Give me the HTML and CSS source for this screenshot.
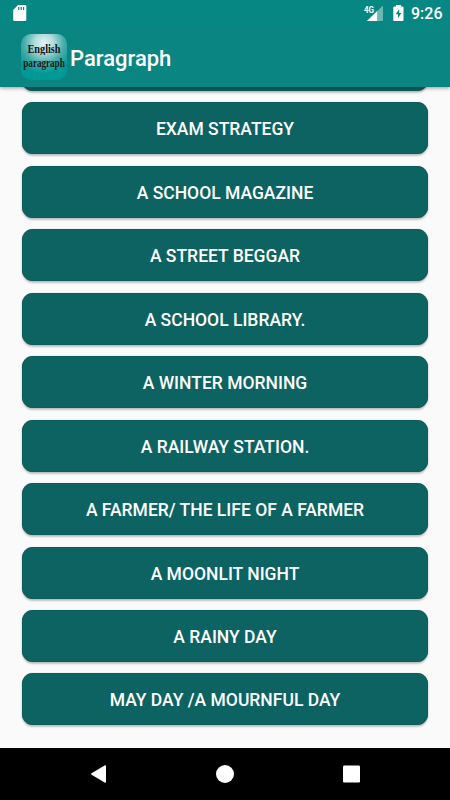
FILE: index.html
```html
<!DOCTYPE html>
<html lang="en">
<head>
<meta charset="utf-8">
<title>Paragraph</title>
<link rel="stylesheet" href="styles.css">
</head>
<body>
<div class="screen">
  <header class="header">
    <div class="status">
      <svg class="sd" width="14" height="16" viewBox="0 0 14 16"><path fill="#fff" d="M5 0H12Q13.300 0 13.300 1.300V14.700Q13.300 16 12 16H1.500Q.2 16 .2 14.700V5Z"/><path stroke="#078783" stroke-width="1.200" d="M5.800 2v3M8.200 2v3M10.600 2v3"/></svg>
      <span class="grow"></span>
      <svg class="signal" width="21" height="17" viewBox="0 0 21 17"><path fill="#fff" fill-opacity=".4" d="M20 .5V16H4Z"/><path fill="#fff" d="M14.200 6.100V16H4Z"/><text class="net" x="1" y="7.500" textLength="10" lengthAdjust="spacingAndGlyphs">4G</text></svg>
      <svg class="battery" width="11" height="16" viewBox="0 0 11 16"><path fill="#fff" d="M3 0H8V1.500H9.600Q10.500 1.500 10.500 2.400V15Q10.500 16 9.600 16H1.200Q.3 16 .3 15V2.400Q.3 1.500 1.200 1.500H3Z"/><path fill="#078783" d="M6.200 4 2.700 9.300H5V13.300L8.300 8H6.200Z"/></svg>
      <span class="clock">9:26</span>
    </div>
    <div class="appbar">
      <div class="logo"><span class="word big">English</span><span class="word">paragraph</span></div>
      <h1 class="title">Paragraph</h1>
    </div>
  </header>
  <main class="list">
    <div class="item"></div>
    <div class="item">EXAM STRATEGY</div>
    <div class="item">A SCHOOL MAGAZINE</div>
    <div class="item">A STREET BEGGAR</div>
    <div class="item">A SCHOOL LIBRARY.</div>
    <div class="item">A WINTER MORNING</div>
    <div class="item">A RAILWAY STATION.</div>
    <div class="item">A FARMER/ THE LIFE OF A FARMER</div>
    <div class="item">A MOONLIT NIGHT</div>
    <div class="item">A RAINY DAY</div>
    <div class="item">MAY DAY /A MOURNFUL DAY</div>
  </main>
  <nav class="nav">
    <svg width="18" height="20" viewBox="0 0 18 20"><path fill="#fff" d="M1.600 9.300 14.600 1.400Q16 .8 16 2.200V17.800Q16 19.200 14.600 18.600L1.600 10.700Q.4 10 1.600 9.300Z"/></svg>
    <svg width="18" height="18" viewBox="0 0 18 18"><circle cx="9" cy="9" r="9" fill="#fff"/></svg>
    <svg width="18" height="18" viewBox="0 0 18 18"><rect x="1" y=".5" width="17" height="17" rx="1.200" fill="#fff"/></svg>
  </nav>
</div>
</body>
</html>
```
FILE: styles.css
```css
* { box-sizing: border-box; }
body { margin: 0; font-family: Roboto, "Liberation Sans", sans-serif; }
.screen {
  width: 450px;
  height: 800px;
  display: flex;
  flex-direction: column;
  background: #fafafa;
  overflow: hidden;
}
.header {
  position: relative;
  z-index: 1;
  flex: 0 0 87px;
  background: #0b8581;
  box-shadow: 0 1px 4px rgba(0, 0, 0, .4);
}
.status {
  height: 27px;
  display: flex;
  align-items: flex-start;
  padding: 5px 8px 0 13px;
  background: #078783;
}
.grow { flex: 1; }
.signal { margin-right: 9px; }
.net { font-size: 9.5px; font-weight: 700; fill: #fff; }
.battery { margin-right: 7px; }
.clock {
  width: 31px;
  font-size: 16px;
  line-height: 18px;
  font-weight: 500;
  color: #fff;
  white-space: nowrap;
}
.appbar { height: 60px; display: flex; align-items: center; padding: 0 21px; }
.logo {
  width: 46px;
  height: 46px;
  margin: -1px 3px 0 0;
  padding-top: 8px;
  display: flex;
  flex-direction: column;
  align-items: center;
  border-radius: 10px;
  background: radial-gradient(circle at 50% 20%, #e4f5f4 0, #b0dcdb 22%, #46adaa 46%, #009996 70%);
}
.word {
  font-family: "Liberation Serif", serif;
  font-size: 9.1px;
  line-height: 14px;
  font-weight: 700;
  color: #171717;
  white-space: nowrap;
  transform: scaleY(1.3);
}
.big { font-size: 10.3px; transform: scaleY(1.17); }
.title {
  margin: 0;
  padding-top: 3px;
  font-size: 22px;
  line-height: 26px;
  font-weight: 500;
  color: #fff;
}
.list {
  flex: 1;
  min-height: 0;
  display: flex;
  flex-direction: column;
  justify-content: flex-end;
  gap: 11.450px;
  padding: 0 22px 22.600px;
  overflow: hidden;
}
.item {
  flex: 0 0 52px;
  display: flex;
  align-items: center;
  justify-content: center;
  padding-top: 2px;
  border-radius: 11px;
  background: #0c6362;
  box-shadow: 0 2px 2px rgba(0, 0, 0, .22), 0 0 1px rgba(0, 0, 0, .35), inset 0 0 1px #043d3c;
  color: #fff;
  font-size: 17.5px;
  line-height: 22px;
  font-weight: 500;
  white-space: nowrap;
}
.nav {
  flex: 0 0 52px;
  display: flex;
  align-items: center;
  justify-content: space-between;
  padding: 0 90px;
  background: #000;
}
```
